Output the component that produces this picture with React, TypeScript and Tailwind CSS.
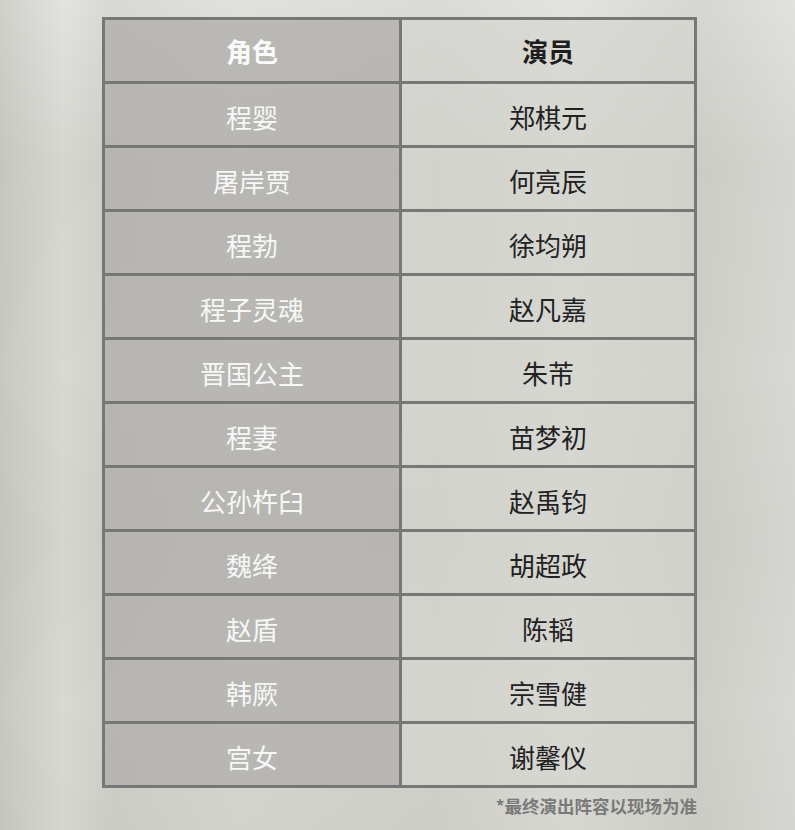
import React from "react";

const rows: [string, string][] = [
  ["程婴", "郑棋元"],
  ["屠岸贾", "何亮辰"],
  ["程勃", "徐均朔"],
  ["程子灵魂", "赵凡嘉"],
  ["晋国公主", "朱芾"],
  ["程妻", "苗梦初"],
  ["公孙杵臼", "赵禹钧"],
  ["魏绛", "胡超政"],
  ["赵盾", "陈韬"],
  ["韩厥", "宗雪健"],
  ["宫女", "谢馨仪"],
];

const font = { fontFamily: '"Noto Sans CJK SC", "Noto Sans", sans-serif' };

export default function App() {
  return (
    <div
      className="w-full h-[830px] overflow-hidden bg-[#d0d0cb] bg-[linear-gradient(90deg,rgba(180,180,172,0.35)_0%,rgba(235,235,230,0.25)_8%,rgba(190,190,182,0.2)_14%,rgba(230,230,225,0.15)_30%,rgba(200,200,193,0.2)_55%,rgba(235,235,230,0.3)_72%,rgba(195,195,188,0.3)_88%,rgba(230,230,226,0.3)_100%),linear-gradient(180deg,rgba(240,240,236,0.5)_0%,rgba(205,205,198,0.1)_20%,rgba(225,225,220,0.2)_45%,rgba(200,200,193,0.25)_65%,rgba(225,225,220,0.2)_85%,rgba(205,205,198,0.3)_100%)]"
      style={font}
    >
      <div className="pt-[17px] pl-[102px]">
        <div className="w-[595px] border-[3px] border-[#777777] flex flex-col">
          <div className="flex h-[61px]">
            <div className="w-[294px] bg-[#b0afab]/80 flex items-center justify-center pt-[0px] text-[26px] font-bold text-[#fafafa]">
              角色
            </div>
            <div className="w-[3px] bg-[#777777]" />
            <div className="flex-1 bg-[#d6d5d0]/60 flex items-center justify-center pt-[0px] text-[26px] font-bold text-[#1e1e1e]">
              演员
            </div>
          </div>
          {rows.map(([role, actor]) => (
            <div key={role} className="flex h-[64px] border-t-[3px] border-[#777777]">
              <div className="w-[294px] bg-[#b0afab]/80 flex items-center justify-center pt-[3px] text-[26px] text-[#f7f7f7]">
                {role}
              </div>
              <div className="w-[3px] bg-[#777777]" />
              <div className="flex-1 bg-[#d6d5d0]/60 flex items-center justify-center pt-[3px] text-[26px] text-[#222222]">
                {actor}
              </div>
            </div>
          ))}
        </div>
        <div className="w-[595px] flex justify-end mt-[6px] text-[17.5px] font-bold text-[#7a7a7a] leading-[24px]">
          *最终演出阵容以现场为准
        </div>
      </div>
    </div>
  );
}
